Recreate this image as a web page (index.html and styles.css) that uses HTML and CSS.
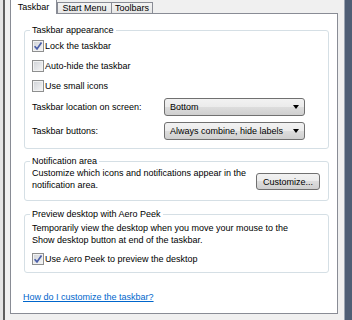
FILE: index.html
```html
<!DOCTYPE html>
<html lang="en">
<head>
  <meta charset="UTF-8" />
  <title>Taskbar and Start Menu Properties</title>
  <link rel="stylesheet" href="styles.css">
</head>
<body>
  <div class="window">
    <div class="edge-left"></div>

    <div class="dialog">
      <!-- tabs -->
      <div class="tabs">
        <div class="tab active">Taskbar</div>
        <div class="tab tab-start">Start Menu</div>
        <div class="tab tab-toolbars">Toolbars</div>
      </div>

      <div class="page">
        <fieldset class="group group-appearance">
          <legend>Taskbar appearance</legend>
          <label class="check-row">
            <span class="checkbox"><svg width="10" height="10" viewBox="0 0 10 10"><path d="M1.6 5.2 L4 7.9 L8.5 1.6" fill="none" stroke="#4a5ea8" stroke-width="1.7"/></svg></span>
            Lock the taskbar
          </label>
          <label class="check-row">
            <span class="checkbox"></span>
            Auto-hide the taskbar
          </label>
          <label class="check-row">
            <span class="checkbox"></span>
            Use small icons
          </label>
          <div class="combo-row">
            <span class="combo-label">Taskbar location on screen:</span>
            <div class="combo"><span class="combo-text">Bottom</span><span class="arrow"></span></div>
          </div>
          <div class="combo-row">
            <span class="combo-label">Taskbar buttons:</span>
            <div class="combo"><span class="combo-text">Always combine, hide labels</span><span class="arrow"></span></div>
          </div>
        </fieldset>

        <fieldset class="group group-notify">
          <legend>Notification area</legend>
          <div class="notify-row">
            <p class="desc">Customize which icons and notifications appear in the notification area.</p>
            <button class="btn">Customize...</button>
          </div>
        </fieldset>

        <fieldset class="group group-peek">
          <legend>Preview desktop with Aero Peek</legend>
          <p class="desc desc-peek">Temporarily view the desktop when you move your mouse to the Show desktop button at end of the taskbar.</p>
          <label class="check-row">
            <span class="checkbox"><svg width="10" height="10" viewBox="0 0 10 10"><path d="M1.6 5.2 L4 7.9 L8.5 1.6" fill="none" stroke="#4a5ea8" stroke-width="1.7"/></svg></span>
            Use Aero Peek to preview the desktop
          </label>
        </fieldset>

        <a class="help-link" href="#">How do I customize the taskbar?</a>
      </div>
    </div>

    <div class="edge-right"></div>
  </div>
</body>
</html>
```

FILE: styles.css
```css
body {
  margin: 0;
  font-family: "Liberation Sans", Arial, sans-serif;
  font-size: 9px;
  line-height: 12px;
  color: #000;
  background: #f0f0f0;
}

.window {
  display: flex;
  width: 352px;
  height: 320px;
  overflow: hidden;
}

.edge-left {
  width: 5px;
  background: linear-gradient(to right, #e4e4e4 0 3px, #5e5e5e 3px 5px);
}

.edge-right {
  width: 7px;
  border-left: 1px solid #9ca5b2;
  background: #4f5e75;
}

.dialog {
  width: 328px;
  padding: 0 6px 0 5px;
}

/* tabs */
.tabs {
  display: flex;
  height: 13px;
}

.tab {
  position: relative;
  box-sizing: border-box;
  height: 11px;
  margin-top: 2px;
  border: 1px solid #898c95;
  border-bottom: none;
  background: linear-gradient(#f4f4f4, #e6e6e6);
  text-align: center;
  line-height: 10px;
}

.tab.active {
  z-index: 1;
  width: 47px;
  height: 16px;
  margin-top: -2px;
  background: #fff;
  line-height: 16px;
}

.tab-start {
  width: 55px;
}

.tab-toolbars {
  width: 42px;
  margin-left: -1px;
}

.page {
  box-sizing: border-box;
  height: 301px;
  padding: 10px 8px 0 13px;
  border: 1px solid #898c95;
  background: #fff;
}

/* group boxes */
.group {
  margin: 0;
  padding: 3px 8px 8px 7px;
  border: 1px solid #d5dfe5;
  border-radius: 3px;
}

.group legend {
  padding: 0 2px;
  margin-left: -2px;
  line-height: 12px;
}

.group-notify {
  margin-top: 6px;
  padding-top: 0;
  padding-bottom: 9px;
}

.group-peek {
  margin-top: 7px;
  padding-top: 2px;
  padding-bottom: 7px;
}

.check-row {
  display: flex;
  align-items: center;
  height: 13px;
  margin-bottom: 7px;
}

.group-peek .check-row {
  margin: 6px 0 0;
}

.checkbox {
  display: flex;
  align-items: center;
  justify-content: center;
  box-sizing: border-box;
  width: 12px;
  height: 12px;
  margin-right: 1px;
  border: 1px solid #8e8f8f;
  background: linear-gradient(135deg, #cfd2d7, #f6f6f6);
  box-shadow: inset 0 0 0 1px #f2f2f2;
}

.combo-row {
  display: flex;
  align-items: center;
  margin-top: 6px;
}

.check-row + .combo-row {
  margin-top: -1px;
}

.combo-label {
  width: 132px;
}

.combo {
  display: flex;
  align-items: center;
  justify-content: space-between;
  box-sizing: border-box;
  width: 141px;
  height: 18px;
  padding: 0 5px 0 5px;
  border: 1px solid #707070;
  border-radius: 3px;
  background: linear-gradient(#f2f2f2 0%, #ebebeb 50%, #dddddd 50%, #cfcfcf 100%);
}

.arrow {
  width: 0;
  height: 0;
  border-left: 3.5px solid transparent;
  border-right: 3.5px solid transparent;
  border-top: 4px solid #000;
}

.notify-row {
  display: flex;
  align-items: flex-start;
}

.desc {
  margin: 0;
}

.notify-row .desc {
  flex: 1;
}

.desc-peek {
  width: 280px;
}

.btn {
  box-sizing: border-box;
  width: 64px;
  height: 17px;
  margin: 6px 0 0 3px;
  padding: 0;
  border: 1px solid #707070;
  border-radius: 3px;
  background: linear-gradient(#f2f2f2 0%, #ebebeb 50%, #dddddd 50%, #cfcfcf 100%);
  font: inherit;
  color: #000;
}

.help-link {
  display: block;
  margin: 18px 0 0 -1px;
  color: #0066cc;
}
```
